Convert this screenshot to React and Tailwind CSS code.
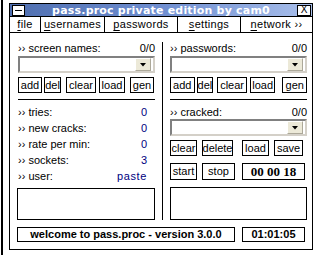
import React from 'react';

const sans = { fontFamily: '"Liberation Sans", Arial, sans-serif' };

function Btn({ children, className = '' }) {
  return (
    <div className={`h-full flex items-center justify-center bg-white border border-black text-[11px] leading-none text-black ${className}`}>
      {children}
    </div>
  );
}

function Combo({ className = '' }) {
  return (
    <div className={`h-[17px] flex justify-end items-start bg-white border-2 border-t-[#808080] border-l-[#808080] border-b-[#d4d0c8] border-r-[#d4d0c8] ${className}`}>
      <div className="w-[16px] h-[13px] mr-[2px] flex items-center justify-center bg-[#ece9d8] border border-t-white border-l-white border-b-[#aca899] border-r-[#aca899]">
        <svg width="6" height="4" viewBox="0 0 6 4">
          <path d="M0 0h6L3 3.5z" fill="#000" />
        </svg>
      </div>
    </div>
  );
}

function Label({ text, count }) {
  return (
    <div className="h-[13px] flex justify-between items-center text-[11px] leading-none text-black">
      <span>›› {text}</span>
      {count && <span>{count}</span>}
    </div>
  );
}

function Stat({ label, value, mono }) {
  return (
    <div className="h-[16px] flex justify-between items-center text-[11px] leading-none">
      <span className="text-black">›› {label}</span>
      <span className={`text-[#000080] pr-[8px] ${mono ? 'tracking-[0.6px]' : ''}`}>{value}</span>
    </div>
  );
}

function MenuItem({ first, rest, className = '' }) {
  return (
    <div className={`flex items-center justify-center border-r border-black text-[11px] leading-none tracking-[0.3px] ${className}`}>
      <span>
        <span className="underline underline-offset-2">{first}</span>
        {rest}
      </span>
    </div>
  );
}

export default function App() {
  return (
    <div className="w-[317px] h-[255px] bg-white flex overflow-hidden" style={sans}>
      {/* stray edge of the window behind */}
      <div className="ml-px w-[2px] h-full bg-black" />

      <div className="ml-[6px] mt-[3px] w-[304px] h-[247px] border border-black flex flex-col">
        {/* title bar */}
        <div className="h-[13px] flex items-center pl-[2px] pr-[1px] border-b border-black bg-gradient-to-r from-[#4f6fb0] via-[#6f8ed0] to-[#a9bfeb]">
          <div className="w-[13px] h-[11px] bg-white border border-black flex items-center justify-center">
            <div className="w-[7px] h-px bg-black" />
          </div>
          <div
            className="flex-1 text-center text-white font-bold text-[11px] leading-none tracking-[0.2px]"
            style={{ fontFamily: '"DejaVu Sans", Verdana, sans-serif' }}
          >
            pass.proc private edition by cam0
          </div>
          <div className="w-[14px] h-[11px] bg-white border border-black flex items-center justify-center text-[10px] leading-none text-black">
            X
          </div>
        </div>

        {/* menu */}
        <div className="h-[16px] flex border-b border-black text-black">
          <MenuItem first="f" rest="ile" className="w-[31px]" />
          <MenuItem first="u" rest="sernames" className="w-[64px]" />
          <MenuItem first="p" rest="asswords" className="w-[73px]" />
          <MenuItem first="s" rest="ettings" className="w-[63px]" />
          <MenuItem first="n" rest="etwork ››" className="flex-1 border-r-0" />
        </div>

        <div className="flex-1 flex flex-col pl-[8px] pr-[4px]">
          <div className="flex">
            {/* left panel */}
            <div className="w-[137px] pt-[9px] flex flex-col">
              <Label text="screen names:" count="0/0" />
              <Combo className="mt-[1px]" />
              <div className="mt-[4px] h-[16px] flex">
                <Btn className="w-[24px]">add</Btn>
                <Btn className="w-[17px] ml-[2px]">del</Btn>
                <Btn className="w-[30px] ml-[5px]">clear</Btn>
                <Btn className="w-[26px] ml-[3px]">load</Btn>
                <Btn className="w-[24px] ml-[5px]">gen</Btn>
              </div>
              <div className="mt-[6px] h-px bg-black" />
              <div className="mt-[4px] flex flex-col">
                <Stat label="tries:" value="0" />
                <Stat label="new cracks:" value="0" />
                <Stat label="rate per min:" value="0" />
                <Stat label="sockets:" value="3" />
                <Stat label="user:" value="paste" mono />
              </div>
              <div className="mt-[4px] h-[32px] border border-black -ml-px" />
            </div>

            {/* divider */}
            <div className="mx-[7px] mt-[9px] w-px bg-black" />

            {/* right panel */}
            <div className="w-[137px] pt-[9px] flex flex-col">
              <Label text="passwords:" count="0/0" />
              <Combo className="mt-[1px]" />
              <div className="mt-[4px] h-[16px] flex">
                <Btn className="w-[25px]">add</Btn>
                <Btn className="w-[17px] ml-[2px]">del</Btn>
                <Btn className="w-[30px] ml-[4px]">clear</Btn>
                <Btn className="w-[26px] ml-[3px]">load</Btn>
                <Btn className="w-[25px] ml-[7px]">gen</Btn>
              </div>
              <div className="mt-[6px] h-px bg-black" />
              <div className="mt-[6px]">
                <Label text="cracked:" count="0/0" />
              </div>
              <Combo />
              <div className="mt-[4px] h-[16px] flex">
                <Btn className="w-[27px]">clear</Btn>
                <Btn className="w-[31px] ml-[5px]">delete</Btn>
                <Btn className="w-[27px] ml-[9px]">load</Btn>
                <Btn className="w-[29px] ml-[5px]">save</Btn>
              </div>
              <div className="mt-[7px] h-[17px] flex">
                <Btn className="w-[27px]">start</Btn>
                <Btn className="w-[33px] ml-[5px]">stop</Btn>
                <Btn className="w-[63px] ml-[7px] font-bold text-[13px]">
                  <span style={{ fontFamily: '"Liberation Serif", "Times New Roman", serif' }}>00 00 18</span>
                </Btn>
              </div>
              <div className="mt-[7px] h-[33px] border border-black" />
            </div>
          </div>

          {/* status bar */}
          <div className="mt-[7px] h-[15px] flex -ml-px">
            <Btn className="w-[218px] font-bold">welcome to pass.proc - version 3.0.0</Btn>
            <Btn className="w-[63px] ml-[7px] font-bold">01:01:05</Btn>
          </div>
        </div>
      </div>
    </div>
  );
}
